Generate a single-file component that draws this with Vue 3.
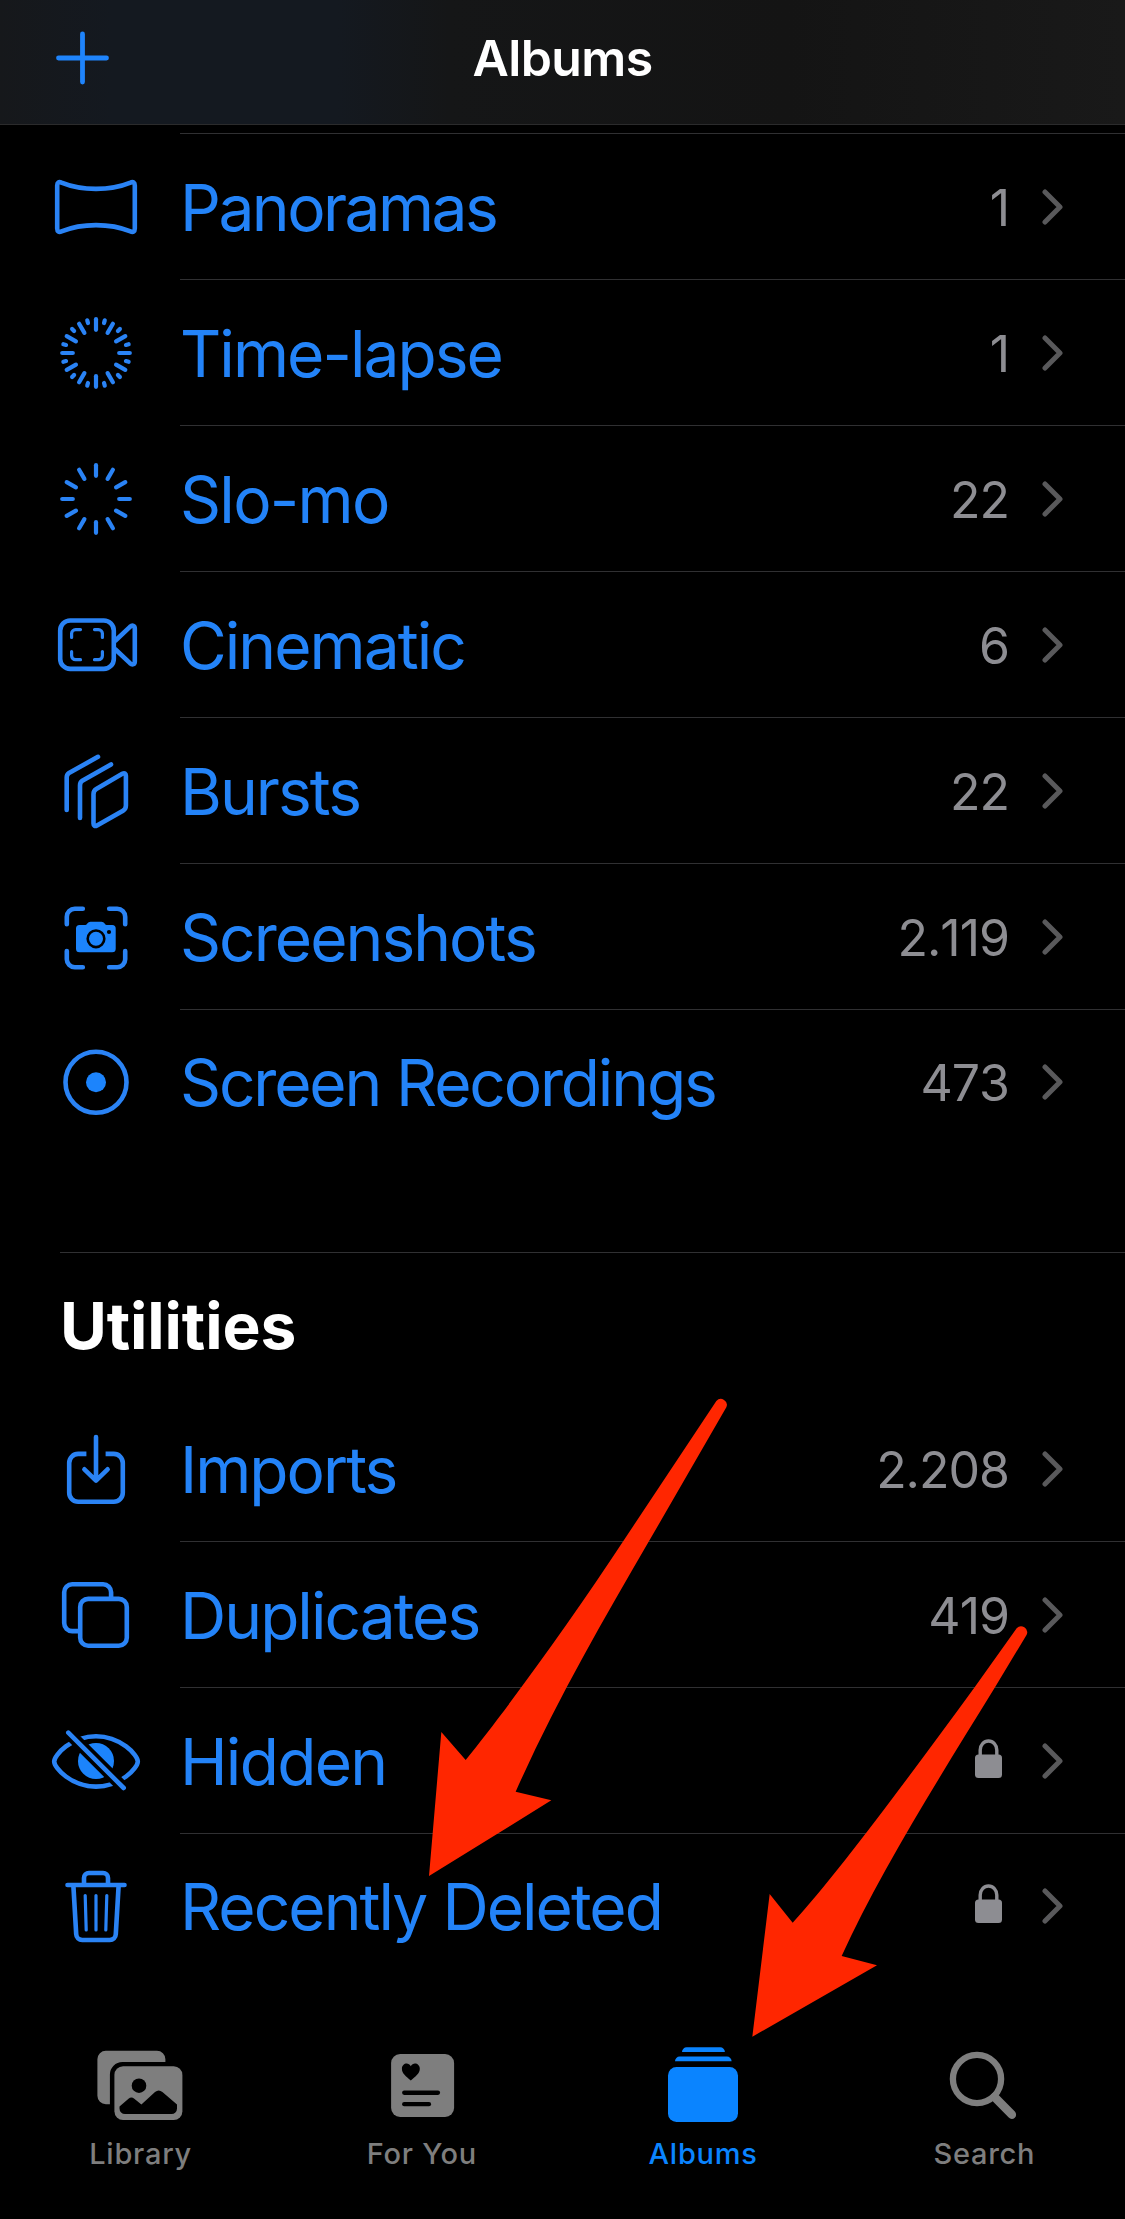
<script setup>
const mediaTypes = [
	{ id: 'panoramas', label: 'Panoramas', count: '1' },
	{ id: 'timelapse', label: 'Time-lapse', count: '1' },
	{ id: 'slomo', label: 'Slo-mo', count: '22' },
	{ id: 'cinematic', label: 'Cinematic', count: '6' },
	{ id: 'bursts', label: 'Bursts', count: '22' },
	{ id: 'screenshots', label: 'Screenshots', count: '2.119' },
	{ id: 'recordings', label: 'Screen Recordings', count: '473' },
];

const utilities = [
	{ id: 'imports', label: 'Imports', count: '2.208' },
	{ id: 'duplicates', label: 'Duplicates', count: '419' },
	{ id: 'hidden', label: 'Hidden', locked: true },
	{ id: 'deleted', label: 'Recently Deleted', locked: true },
];

const sections = [
	{ id: 'media', rows: mediaTypes },
	{ id: 'utilities', title: 'Utilities', rows: utilities },
];

const tabs = [
	{ id: 'library', label: 'Library' },
	{ id: 'foryou', label: 'For You' },
	{ id: 'albums', label: 'Albums', active: true },
	{ id: 'search', label: 'Search' },
];

// angles of the dial icons, every 30 degrees
const spokes = Array.from({ length: 12 }, (_, i) => i * 30);
</script>

<template>
	<div class="screen">
		<header class="nav">
			<svg class="nav-add" viewBox="0 0 54 54"><path d="M26.5 3V51M2.5 27H50.5" /></svg>
			<h1 class="nav-title">Albums</h1>
		</header>

		<main class="content">
			<section v-for="section in sections" :key="section.id" class="section" :class="'section-' + section.id">
				<h2 v-if="section.title" class="section-title">{{ section.title }}</h2>
				<ul class="list">
					<li v-for="row in section.rows" :key="row.id" class="row">
						<svg class="row-icon" viewBox="-48 -48 96 96">
							<path v-if="row.id === 'panoramas'" d="M-38.8 -21.5C-38.8 -24.6 -37 -25.6 -34.5 -24.4C-14 -16 14 -16 34.5 -24.4C37 -25.6 38.8 -24.6 38.8 -21.5V21.5C38.8 24.6 37 25.6 34.5 24.4C14 16 -14 16 -34.5 24.4C-37 25.6 -38.8 24.6 -38.8 21.5Z" />
							<g v-else-if="row.id === 'timelapse'" class="dial">
								<template v-for="a in spokes" :key="a">
									<path d="M0 -33.8V-23.2" :transform="`rotate(${a})`" />
									<path d="M0 -33.8V-31" :transform="`rotate(${a + 15})`" />
								</template>
							</g>
							<g v-else-if="row.id === 'slomo'" class="dial">
								<path v-for="a in spokes" :key="a" d="M0 -33.8V-23.2" :transform="`rotate(${a})`" />
							</g>
							<g v-else-if="row.id === 'cinematic'">
								<rect x="-35.8" y="-24.5" width="53.6" height="48.4" rx="10" />
								<path d="M19.5 -4.5L34 -18.2C36.5 -20.4 38.8 -19.3 38.8 -16.5V16.5C38.8 19.3 36.5 20.4 34 18.2L19.5 4.5" />
								<path class="thin" d="M-24.4 -7.5V-11.4A4 4 0 0 1 -20.4 -15.4H-15.5M-1.5 -15.4H2.4A4 4 0 0 1 6.4 -11.4V-7.5M6.4 6.5V10.7A4 4 0 0 1 2.4 14.7H-1.5M-15.5 14.7H-20.4A4 4 0 0 1 -24.4 10.7V6.5" />
							</g>
							<g v-else-if="row.id === 'bursts'">
								<path d="M-29.3 19V-13.5C-29.3 -16 -28.8 -16.9 -27 -18L2 -34.2M-16 27V-5.5C-16 -8 -15.5 -9.1 -13.7 -10.2L15 -26.6" />
								<path d="M-2.5 3.2C-2.5 .6 -1.8 -.7 .3 -1.9L26.3 -17.2C28.5 -18.4 29.9 -17.6 29.9 -15.2V14.5C29.9 17 29.2 18.4 27 19.7L1 34.5C-1.2 35.7 -2.5 34.9 -2.5 32.5Z" />
							</g>
							<g v-else-if="row.id === 'screenshots'">
								<path d="M-29.2 -12.8V-20.2A8 8 0 0 1 -21.2 -28.2H-13.2M13.2 -28.2H21.2A8 8 0 0 1 29.2 -20.2V-12.8M29.2 14V22.2A8 8 0 0 1 21.2 30.2H13.2M-13.2 30.2H-21.2A8 8 0 0 1 -29.2 22.2V14" />
								<path class="solid" d="M-16.5 -12H-10.5C-9 -12 -8.3 -15.2 -5.5 -15.2H5.5C8.3 -15.2 9 -12 10.5 -12H16.2A3.5 3.5 0 0 1 19.7 -8.5V11.8A3.5 3.5 0 0 1 16.2 15.3H-16.5A3.5 3.5 0 0 1 -20 11.8V-8.5A3.5 3.5 0 0 1 -16.5 -12Z" />
								<circle class="lens" cx="0" cy="1.8" r="8.3" />
								<circle class="hole" cx="13" cy="-5" r="2.1" />
							</g>
							<g v-else-if="row.id === 'recordings'">
								<circle cx="0" cy=".3" r="30.5" />
								<circle class="solid" cx="0" cy=".3" r="10" />
							</g>
							<g v-else-if="row.id === 'imports'">
								<path class="butt" d="M-9.6 -15.1H-17.8A9 9 0 0 0 -26.8 -6.1V23.8A9 9 0 0 0 -17.8 32.8H17.8A9 9 0 0 0 26.8 23.8V-6.1A9 9 0 0 0 17.8 -15.1H9.6" />
								<path d="M0 -32V11.3M-11.6 .3L0 11.6L11.6 .3" />
							</g>
							<g v-else-if="row.id === 'duplicates'">
								<rect x="-15.8" y="-16.1" width="46.6" height="46.9" rx="8" />
								<path class="butt" d="M15.1 -17V-22.8A8 8 0 0 0 7.1 -30.8H-23.8A8 8 0 0 0 -31.8 -22.8V8.1A8 8 0 0 0 -23.8 16.1H-17" />
							</g>
							<g v-else-if="row.id === 'hidden'">
								<path d="M0 -24.8C24.5 -24.8 41.8 -6 41.8 .4C41.8 7 24.5 25.6 0 25.6C-24.5 25.6 -41.8 7 -41.8 .4C-41.8 -6 -24.5 -24.8 0 -24.8Z" />
								<circle class="solid" cx="0" cy="0" r="18" />
								<path class="gap" d="M-27.7 -28.3L27.7 27" />
								<path d="M-27.7 -28.3L27.7 27" />
							</g>
							<g v-else>
								<path d="M-28.5 -21H28.5M-12 -21V-28A5 5 0 0 1 -7 -33H7A5 5 0 0 1 12 -28V-21M-22.6 -20L-19.8 28.2A6 6 0 0 0 -13.8 34H13.8A6 6 0 0 0 19.8 28.2L22.6 -20" />
								<path class="thin" d="M-10.8 -10.5L-9.8 24M0 -10.5V24M10.8 -10.5L9.8 24" />
							</g>
						</svg>
						<div class="row-body">
							<span class="row-label" :class="'label-' + row.id">{{ row.label }}</span>
							<svg v-if="row.locked" class="row-lock" viewBox="0 0 27 39">
								<path class="shackle" d="M5.2 19V11A8.3 9 0 0 1 21.8 11V19" />
								<rect x="0" y="15.5" width="27" height="23.5" rx="3.5" />
							</svg>
							<span v-else class="row-count">{{ row.count }}</span>
							<svg class="row-chevron" viewBox="0 0 21 36"><path d="M3 3L18 18L3 33" /></svg>
						</div>
					</li>
				</ul>
			</section>
		</main>

		<nav class="tabs">
			<a v-for="tab in tabs" :key="tab.id" class="tab" :class="{ active: tab.active }">
				<svg class="tab-icon" viewBox="-50 0 100 80">
					<g v-if="tab.id === 'library'">
						<path d="M-35.1 5.7H15.9A8.5 8.5 0 0 1 24.4 14.2V17H-18.6A12.5 12.5 0 0 0 -31.1 29.5V59.3H-35.1A8.5 8.5 0 0 1 -43.6 50.8V14.2A8.5 8.5 0 0 1 -35.1 5.7Z" />
						<rect x="-26.6" y="21.3" width="68" height="53.7" rx="8.7" />
						<circle class="hole" cx="-2" cy="40.7" r="7.3" />
						<path class="hole" d="M-21.5 61.5L-12.5 53.7Q-9.6 51.5 -6.7 53.7L.4 59.5L14 47.1Q17.7 43.8 21.4 47.1L36 59.5V63.5A5.5 5.5 0 0 1 30.5 69H-16A5.5 5.5 0 0 1 -21.5 63.5Z" />
					</g>
					<g v-else-if="tab.id === 'foryou'">
						<rect x="-30.9" y="9" width="63" height="63" rx="9" />
						<path class="hole" d="M-11.2 35.4C-16 31.7 -20.1 28.3 -20.1 23.8C-20.1 18.4 -13.6 16.6 -11.2 21.3C-8.8 16.6 -2.2 18.4 -2.2 23.8C-2.2 28.3 -6.4 31.7 -11.2 35.4Z" />
						<rect class="hole" x="-19.9" y="45.6" width="38" height="4.3" rx="2.1" />
						<rect class="hole" x="-19.9" y="57" width="29" height="4.3" rx="2.1" />
					</g>
					<g v-else-if="tab.id === 'albums'">
						<path d="M-21 7A4.7 4.7 0 0 1 -16.3 2.3H17.2A4.7 4.7 0 0 1 21.9 7ZM-28 16.3A4.7 4.7 0 0 1 -23.3 11.6H23.9A4.7 4.7 0 0 1 28.6 16.3Z" />
						<rect x="-35" y="22" width="70" height="55" rx="8.5" />
					</g>
					<g v-else class="magnifier">
						<circle cx="-7" cy="34" r="24.1" />
						<path d="M10.5 52L27.8 69.6" />
					</g>
				</svg>
				<span class="tab-label">{{ tab.label }}</span>
			</a>
		</nav>

		<svg class="arrow arrow-deleted" viewBox="0 0 1080 1560">
			<path d="M87 1488L124 1056L197 1140C330 975 520 712 672 480L949 63A18 18 0 0 1 979 82L745 487C610 720 467 965 347 1235L454 1261Z" />
		</svg>
		<svg class="arrow arrow-albums" viewBox="0 0 1215 1380">
			<path d="M97 1310L149 882L218 968C350 825 560 540 765 260L890 85A18 18 0 0 1 920 104L825 262C660 530 480 815 365 1068L471 1096Z" />
		</svg>
	</div>
</template>

<style>
body {
	margin: 0;
	background: #000;
}
</style>

<style scoped>
.screen {
	position: relative;
	display: flex;
	flex-direction: column;
	width: 1125px;
	height: 2219px;
	overflow: hidden;
	background: #000;
	color: #fff;
	font-family: Inter, "Liberation Sans", sans-serif;
}

.nav {
	display: grid;
	grid-template-columns: 1fr auto 1fr;
	align-items: center;
	box-sizing: border-box;
	height: 125px;
	padding: 0 56px 9px;
	border-bottom: 1px solid #2b2b2c;
	background: linear-gradient(90deg, #16181b 0%, #141920 10%, #141920 30%, #151617 40%, #141414 70%, #191919 100%);
}
.nav-add {
	width: 54px;
	height: 54px;
	fill: none;
	stroke: #1f84fb;
	stroke-width: 4.8;
	stroke-linecap: round;
}
.nav-title {
	margin: 0;
	font-size: 50px;
	line-height: 60px;
	font-weight: 600;
	letter-spacing: -0.6px;
}

.content {
	flex: 1;
	padding-top: 8px;
}
.list {
	margin: 0;
	padding: 0;
	list-style: none;
}
.row {
	display: flex;
	align-items: center;
	height: 146px;
	padding-left: 48px;
}
.row:last-child { height: 144px; }
.row-icon {
	flex: none;
	width: 96px;
	height: 96px;
	margin: 2px 36px 0 0;
	fill: none;
	stroke: #2a83f5;
	stroke-width: 4.6;
	stroke-linecap: round;
	stroke-linejoin: round;
}
.row-icon .dial { stroke-width: 4.2; }
.row-icon .thin { stroke-width: 3.2; }
.row-icon .butt { stroke-linecap: butt; }
.row-icon .solid { fill: #1c84fc; stroke: none; }
.row-icon .lens { stroke: #000; stroke-width: 2.6; }
.row-icon .hole { fill: #000; stroke: none; }
.row-icon .gap { stroke: #000; stroke-width: 12; }
.row-body {
	display: flex;
	flex: 1;
	align-items: center;
	box-sizing: border-box;
	height: 100%;
	padding: 1px 62px 0 0;
	border-top: 1px solid #303032;
}
.row-label {
	flex: 1;
	padding-top: 1px;
	color: #2383f8;
	font-size: 64px;
	line-height: 78px;
	letter-spacing: -1.95px;
	white-space: nowrap;
}
.label-panoramas { letter-spacing: -2.5px; }
.label-recordings { letter-spacing: -2.15px; }
.label-slomo,
.label-hidden { letter-spacing: -1.7px; }
.row-count {
	padding-top: 1px;
	color: #8d8d92;
	font-size: 50px;
	line-height: 60px;
	font-kerning: none;
	letter-spacing: -1px;
}
.row-lock {
	width: 27px;
	height: 39px;
	margin: 0 7px 5px 0;
	fill: #8d8d92;
}
.shackle {
	fill: none;
	stroke: #8d8d92;
	stroke-width: 3.4;
}
.row-chevron {
	width: 21px;
	height: 36px;
	margin-left: 33px;
	fill: none;
	stroke: #59595b;
	stroke-width: 5;
	stroke-linecap: round;
	stroke-linejoin: round;
}

.section-utilities {
	margin: 99px 0 0 60px;
	border-top: 1px solid #303032;
}
.section-utilities .list { margin-left: -60px; }
.section-utilities .row:first-child .row-body { border-top-color: transparent; }
.section-title {
	margin: 0;
	padding: 34px 0 30px;
	font-size: 64px;
	line-height: 78px;
	font-weight: 700;
	letter-spacing: -0.1px;
}

.tabs {
	display: grid;
	grid-template-columns: repeat(4, 1fr);
	height: 174px;
}
.tab {
	display: flex;
	flex-direction: column;
	align-items: center;
	color: #7e7e7e;
}
.tab.active { color: #0a84ff; }
.tab-icon {
	width: 100px;
	height: 80px;
	fill: currentColor;
}
.tab-icon .hole { fill: #000; }
.magnifier {
	fill: none;
	stroke: currentColor;
	stroke-width: 6.3;
	stroke-linecap: round;
}
.magnifier path { stroke-width: 8.6; }
.tab-label {
	margin-top: 11px;
	font-size: 29px;
	line-height: 36px;
	font-weight: 500;
	letter-spacing: 0.75px;
}

/* callout arrows drawn over the list */
.arrow {
	position: absolute;
	fill: #ff2600;
}
.arrow-deleted {
	top: 1380px;
	left: 400px;
	width: 360px;
	height: 520px;
}
.arrow-albums {
	top: 1600px;
	left: 720px;
	width: 405px;
	height: 460px;
}
</style>
